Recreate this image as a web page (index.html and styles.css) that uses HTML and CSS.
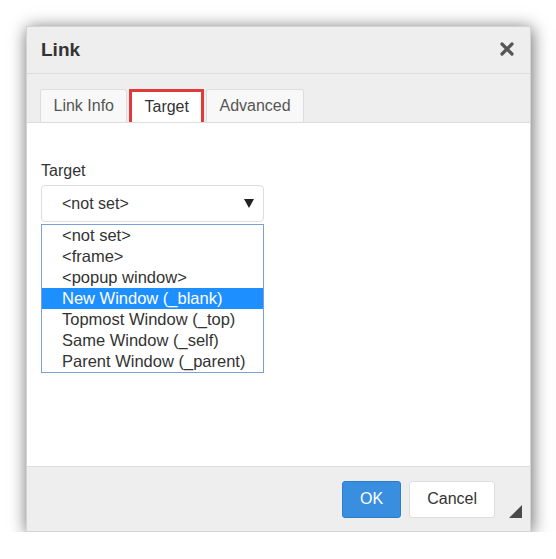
FILE: index.html
```html
<!doctype html>
<html>
  <head>
    <title>Link</title>
    <link rel="stylesheet" href="styles.css">
  </head>
  <body>
    <div class="dialog">
      <div class="dialog-title">
        <span>Link</span>
        <span class="close">
          <svg width="14" height="14" viewBox="0 0 14 14">
            <path d="M2 2 L12 12 M12 2 L2 12" stroke="#555" stroke-width="3.2" stroke-linecap="round"/>
          </svg>
        </span>
      </div>

      <!-- tab strip -->
      <div class="tabs">
        <div class="tab">Link Info</div>
        <div class="tab active">Target</div>
        <div class="tab">Advanced</div>
      </div>

      <div class="dialog-body">
        <div class="field-label">Target</div>
        <div class="select">
          <span>&lt;not set&gt;</span>
          <span class="arrow"></span>
        </div>
        <ul class="options">
          <li>&lt;not set&gt;</li>
          <li>&lt;frame&gt;</li>
          <li>&lt;popup window&gt;</li>
          <li class="selected">New Window (_blank)</li>
          <li>Topmost Window (_top)</li>
          <li>Same Window (_self)</li>
          <li>Parent Window (_parent)</li>
        </ul>
      </div>

      <div class="dialog-footer">
        <button class="btn btn-ok">OK</button>
        <button class="btn">Cancel</button>
        <span class="resize"></span>
      </div>
    </div>
  </body>
</html>
```

FILE: styles.css
```css
body {
  margin: 0;
  background: #fff;
  font-family: "Liberation Sans", Arial, sans-serif;
  font-size: 16px;
  color: #333;
}

.dialog {
  margin: 26px 0 0 26px;
  width: 505px;
  height: 506px;
  display: flex;
  flex-direction: column;
  background: #eee;
  border: 1px solid #d4d4d4;
  box-sizing: border-box;
  box-shadow: 1px 2px 16px rgba(0, 0, 0, 0.6);
}

.dialog-title {
  height: 46px;
  display: flex;
  align-items: center;
  justify-content: space-between;
  padding: 0 16px 0 14px;
  border-bottom: 1px solid #ddd;
  font-size: 19px;
  font-weight: bold;
  color: #333;
}

.close {
  display: flex;
  margin-top: -2px;
}

.tabs {
  display: flex;
  gap: 2px;
  padding: 15px 0 0 13px;
}

.tab {
  height: 33px;
  box-sizing: border-box;
  display: flex;
  align-items: center;
  padding: 0 12.5px;
  background: #f8f8f8;
  border: 1px solid #ddd;
  border-bottom: none;
  border-radius: 3px 3px 0 0;
  color: #555;
}

.tab.active {
  background: #fff;
  border: 3px solid #e03b3b;
  border-bottom: none;
  border-radius: 0;
  padding: 0 12px;
  color: #333;
}

.dialog-body {
  flex: 1;
  background: #fff;
  border-top: 1px solid #ddd;
  border-bottom: 1px solid #ddd;
  padding: 38px 0 0 14px;
}

.field-label {
  line-height: 19px;
  margin-bottom: 5px;
}

.select {
  width: 223px;
  height: 37px;
  box-sizing: border-box;
  display: flex;
  align-items: center;
  justify-content: space-between;
  padding: 0 9px 0 20px;
  border: 1px solid #ddd;
  border-radius: 4px;
}

.arrow {
  width: 0;
  height: 0;
  border-left: 5px solid transparent;
  border-right: 5px solid transparent;
  border-top: 9px solid #222;
}

.options {
  list-style: none;
  margin: 2px 0 0;
  padding: 0;
  width: 223px;
  box-sizing: border-box;
  border: 1px solid #7b9fd6;
  font-size: 16.5px;
}

.options li {
  height: 21px;
  line-height: 21px;
  padding-left: 20px;
  color: #333;
}

.options li.selected {
  background: #1e8fff;
  color: #fff;
}

.dialog-footer {
  height: 64px;
  display: flex;
  align-items: center;
  justify-content: flex-end;
  gap: 8px;
  padding-right: 35px;
  position: relative;
}

.btn {
  height: 37px;
  padding: 0 17px;
  font-family: inherit;
  font-size: 16px;
  color: #333;
  background: #fff;
  border: 1px solid #ddd;
  border-radius: 3px;
}

.btn-ok {
  padding: 0 17px;
  background: #3a8ee0;
  border-color: #2f7dc8;
  color: #fff;
}

.resize {
  position: absolute;
  right: 8px;
  bottom: 13px;
  width: 0;
  height: 0;
  border-left: 13px solid transparent;
  border-bottom: 13px solid #4a4a4a;
}
```
